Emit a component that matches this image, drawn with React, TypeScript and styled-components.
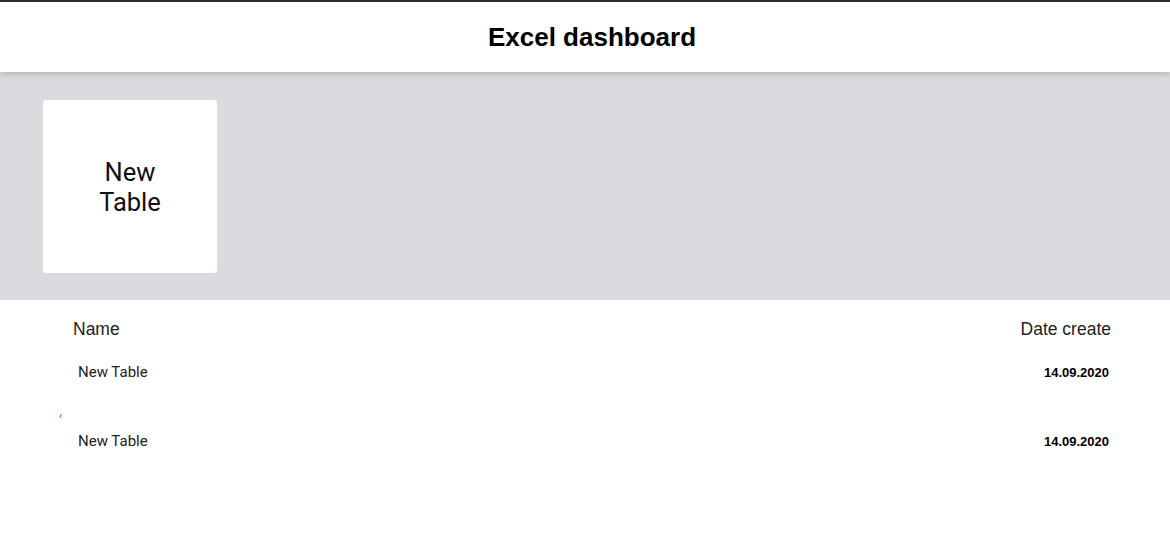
import React from 'react';
import styled, { createGlobalStyle } from 'styled-components';

const GlobalStyle = createGlobalStyle`
  html, body {
    margin: 0;
    padding: 0;
    background: #fff;
    font-family: 'Liberation Sans', Arial, sans-serif;
  }
`;

const Header = styled.header`
  height: 70px;
  border-top: 2px solid #2e2e2e;
  display: flex;
  align-items: center;
  justify-content: center;
  padding-left: 14px;
  background: #fff;
  box-shadow: 0 2px 6px rgba(0, 0, 0, 0.18);
  position: relative;
  z-index: 1;
`;

const Title = styled.h1`
  margin: 0;
  font-family: 'Liberation Sans', Arial, sans-serif;
  font-size: 26px;
  font-weight: 700;
  color: #000;
`;

const Shelf = styled.section`
  background: #dadbdf;
  padding: 28px 43px 27px;
  display: flex;
  gap: 20px;
`;

const Card = styled.div`
  width: 174px;
  height: 173px;
  background: #fff;
  border-radius: 3px;
  display: flex;
  align-items: center;
  justify-content: center;
  text-align: center;
  font-family: Roboto, 'Noto Sans', sans-serif;
  font-size: 25.5px;
  line-height: 30px;
  color: #111;
  cursor: pointer;
`;

const List = styled.div`
  padding: 17px 59px 0 73px;
`;

const ListHead = styled.div`
  display: flex;
  justify-content: space-between;
  font-family: 'Liberation Sans', Arial, sans-serif;
  font-size: 17.5px;
  color: #222;
  line-height: 24px;
`;

const Row = styled.div<{ $first?: boolean }>`
  display: flex;
  justify-content: space-between;
  align-items: center;
  height: 24px;
  margin-top: ${(p) => (p.$first ? '19px' : '45px')};
  padding: 0 2px 0 5px;
  position: relative;
`;

const RowName = styled.span`
  font-family: Roboto, 'Noto Sans', sans-serif;
  font-size: 15px;
  color: #222;
`;

const RowDate = styled.span`
  font-family: 'Liberation Sans', Arial, sans-serif;
  font-size: 13px;
  font-weight: 700;
  color: #000;
`;

const Tick = styled.span`
  position: absolute;
  left: -13px;
  top: -15px;
  width: 1px;
  height: 4px;
  background: #d9542c;
  transform: skewX(-15deg);
`;

const rows = [
  { name: 'New Table', date: '14.09.2020' },
  { name: 'New Table', date: '14.09.2020' },
];

export default function App() {
  return (
    <>
      <GlobalStyle />
      <Header>
        <Title>Excel dashboard</Title>
      </Header>
      <Shelf>
        <Card>
          New
          <br />
          Table
        </Card>
      </Shelf>
      <List>
        <ListHead>
          <span>Name</span>
          <span>Date create</span>
        </ListHead>
        {rows.map((r, i) => (
          <Row key={i} $first={i === 0}>
            {i === 1 && <Tick />}
            <RowName>{r.name}</RowName>
            <RowDate>{r.date}</RowDate>
          </Row>
        ))}
      </List>
    </>
  );
}
